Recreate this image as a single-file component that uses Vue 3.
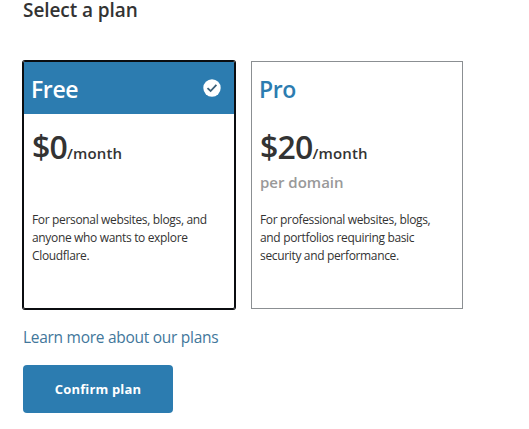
<script setup>
const plans = [
  { name: 'Free', price: '$0', note: '', lines: ['For personal websites, blogs, and', 'anyone who wants to explore', 'Cloudflare.'], selected: true },
  { name: 'Pro', price: '$20', note: 'per domain', lines: ['For professional websites, blogs,', 'and portfolios requiring basic', 'security and performance.'], selected: false },
]
</script>

<template>
  <main class="page">
    <h1 class="title">Select a plan</h1>
    <div class="plans">
      <section v-for="plan in plans" :key="plan.name" class="card" :class="{ selected: plan.selected }">
        <header class="head">
          <h2 class="name">{{ plan.name }}</h2>
          <svg v-if="plan.selected" class="check" viewBox="0 0 18 18">
            <circle cx="9" cy="9" r="8.7" fill="#fff" />
            <path d="M4.5 9.2 7.6 12 13.4 5.9" fill="none" stroke="#3c6078" stroke-width="1.8" />
          </svg>
        </header>
        <div class="price"><span class="amount">{{ plan.price }}</span><span class="period">/month</span></div>
        <div class="note">{{ plan.note }}</div>
        <p class="desc"><span v-for="line in plan.lines" :key="line" class="line">{{ line }}</span></p>
      </section>
    </div>
    <a class="more">Learn more about our plans</a>
    <button class="confirm">Confirm plan</button>
  </main>
</template>

<style>
body {
  background: #fff;
}
</style>

<style scoped>
.page {
  box-sizing: border-box;
  height: 429px;
  padding-left: 23px;
  display: flex;
  flex-direction: column;
  align-items: flex-start;
  font-family: "Open Sans", "Noto Sans", sans-serif;
  color: #333;
  white-space: nowrap;
}
.title {
  margin: 0 0 41px;
  height: 20px;
  line-height: 20px;
  font-size: 19px;
  font-weight: 600;
  letter-spacing: -0.07px;
}
.plans {
  display: flex;
  gap: 16px;
}
.card {
  box-sizing: border-box;
  width: 212px;
  height: 248px;
  border: 1px solid #8b8f92;
}
.selected {
  border-color: #0b0d10;
  border-radius: 2px;
  box-shadow: 0 0 0 1px #0b0d10;
}
.head {
  height: 52px;
  padding: 0 13px 0 7px;
  display: flex;
  align-items: center;
  justify-content: space-between;
  color: #2c7cb0;
}
.selected .head {
  background: #2c7cb0;
  color: #fff;
}
.name {
  margin: 2px 0 0;
  font-size: 23px;
  line-height: 30px;
  font-weight: 600;
  letter-spacing: -0.4px;
}
.check {
  width: 18px;
  height: 18px;
}
.price {
  height: 46px;
  margin-top: 10px;
  padding-left: 8px;
  line-height: 46px;
}
.amount {
  font-size: 32px;
  font-weight: 600;
  letter-spacing: -0.8px;
}
.period {
  font-size: 15px;
  font-weight: 600;
  letter-spacing: 0.15px;
}
.note {
  height: 24px;
  padding-left: 8px;
  line-height: 24px;
  font-size: 15px;
  font-weight: 600;
  color: #999;
}
.desc {
  margin: 17px 0 0;
  padding-left: 8px;
  font-size: 12px;
  line-height: 18px;
  letter-spacing: -0.34px;
}
.line {
  display: block;
}
.more {
  margin-top: 16px;
  height: 24px;
  line-height: 24px;
  font-size: 15.5px;
  letter-spacing: -0.28px;
  color: #42779b;
}
.confirm {
  margin-top: 16px;
  width: 150px;
  height: 48px;
  padding: 0;
  border: 0;
  border-radius: 4px;
  background: #2c7cb0;
  color: #fff;
  font-family: inherit;
  font-size: 13px;
  font-weight: 700;
  letter-spacing: 0.15px;
}
</style>
